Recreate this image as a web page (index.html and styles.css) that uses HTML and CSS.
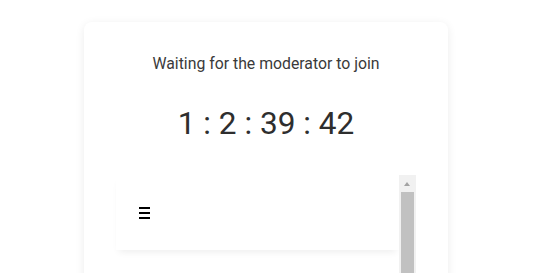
FILE: index.html
```html
<!DOCTYPE html>
<html lang="en">

<head>
  <meta charset="UTF-8">
  <meta name="viewport" content="width=device-width, initial-scale=1.0">
  <title>Waiting room</title>
  <link rel="stylesheet" href="styles.css">
</head>

<body>
  <div class="card">
    <p class="status">Waiting for the moderator to join</p>
    <div class="timer">1 : 2 : 39 : 42</div>

    <div class="panel">
      <div class="panel-main">
        <div class="panel-head">
          <span class="burger"><i></i><i></i><i></i></span>
        </div>
      </div>
      <!-- fake scrollbar, the headless browser hides the real one -->
      <div class="scrollbar">
        <div class="scroll-btn"></div>
        <div class="scroll-thumb"></div>
      </div>
    </div>
  </div>
</body>

</html>
```

FILE: styles.css
```css
body {
  margin: 0;
  background: #fff;
  font-family: Roboto, "Liberation Sans", sans-serif;
  color: #333;
}

.card {
  width: 300px;
  margin: 22px 0 0 84px;
  padding: 33px 32px 0;
  height: 400px;
  background: #fff;
  border-radius: 8px;
  box-shadow: 0 2px 10px rgba(0, 0, 0, 0.08);
}

.status {
  margin: 0;
  font-size: 15.8px;
  line-height: 18px;
  text-align: center;
  color: #3a3a3a;
}

.timer {
  margin-top: 31px;
  font-size: 31.6px;
  line-height: 40px;
  text-align: center;
  color: #2e2e2e;
}

.panel {
  margin-top: 31px;
  height: 250px;
  display: flex;
}

.panel-main {
  flex: 1;
}

.panel-head {
  height: 75px;
  display: flex;
  align-items: center;
  padding-left: 23px;
  background: #fff;
  box-shadow: 0 5px 7px -3px rgba(0, 0, 0, 0.07);
}

.burger {
  display: flex;
  flex-direction: column;
  gap: 3px;
  width: 11px;
}

.burger i {
  display: block;
  height: 2px;
  background: #000;
}

.scrollbar {
  width: 17px;
  background: #f1f1f1;
  display: flex;
  flex-direction: column;
}

.scroll-btn {
  height: 17px;
  position: relative;
}

.scroll-btn::after {
  content: "";
  position: absolute;
  left: 5px;
  top: 7px;
  border-left: 3.5px solid transparent;
  border-right: 3.5px solid transparent;
  border-bottom: 4px solid #a3a3a3;
}

.scroll-thumb {
  margin: 0 2px;
  height: 180px;
  background: #c1c1c1;
}
```
